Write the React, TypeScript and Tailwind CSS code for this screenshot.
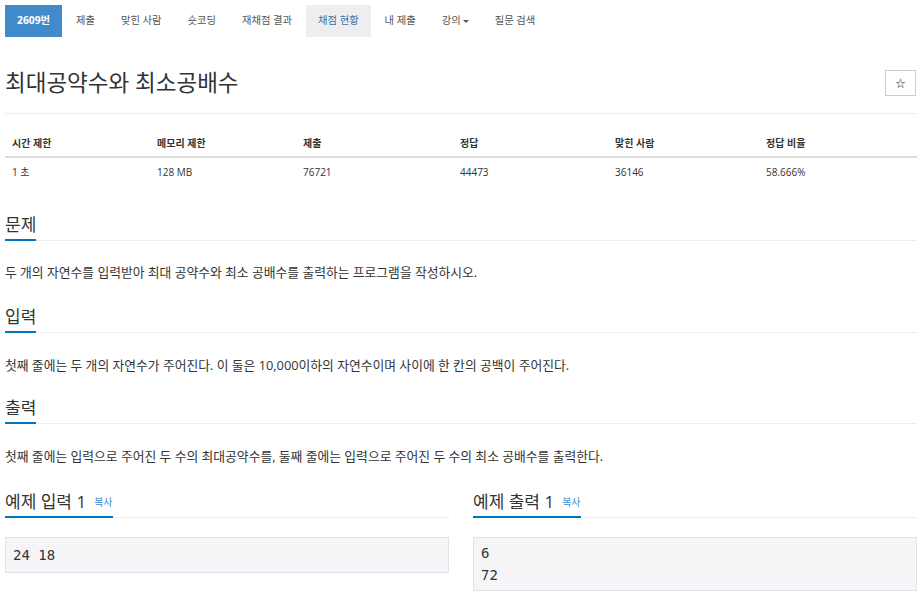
import React from "react";

const FONT = { fontFamily: '"Open Sans", "Noto Sans CJK KR", sans-serif' } as const;

function Tab({ label, active, hover, caret }: { label: string; active?: boolean; hover?: boolean; caret?: boolean }) {
  let cls = "text-[#555]";
  if (active) cls = "bg-[#428bca] text-white font-bold";
  else if (hover) cls = "bg-[#eeeeee] text-[#3a6ea5]";
  return (
    <li className={`flex h-[32px] items-center px-[12px] text-[10.3px] ${cls}`}>
      {label}
      {caret && (
        <span className="ml-[2px] inline-block h-0 w-0 border-l-[3px] border-r-[3px] border-t-[3px] border-l-transparent border-r-transparent border-t-[#555]" />
      )}
    </li>
  );
}

function Heading({ children }: { children: React.ReactNode }) {
  return (
    <div className="flex h-[30px] border-b border-dotted border-[#dddddd]">
      <div className="-mb-[1px] flex items-center border-b-2 border-[#0076c0] text-[17px] text-[#333]">{children}</div>
    </div>
  );
}

export default function App() {
  const headers = ["시간 제한", "메모리 제한", "제출", "정답", "맞힌 사람", "정답 비율"];
  const values = ["1 초", "128 MB", "76721", "44473", "36146", "58.666%"];
  return (
    <div className="min-h-[596px] w-[922px] bg-white px-[5px] text-[#333]" style={FONT}>
      <ul className="mt-[5px] flex gap-[2px]">
        <Tab label="2609번" active />
        <Tab label="제출" />
        <Tab label="맞힌 사람" />
        <Tab label="숏코딩" />
        <Tab label="재채점 결과" />
        <Tab label="채점 현황" hover />
        <Tab label="내 제출" />
        <Tab label="강의" caret />
        <Tab label="질문 검색" />
      </ul>

      <div className="mt-[23px] flex h-[46px] items-center justify-between pr-[1px]">
        <h1 className="text-[22.5px] font-normal text-[#333]">최대공약수와 최소공배수</h1>
        <button className="flex h-[26px] w-[31px] items-center justify-center border border-[#cccccc] bg-white text-[10px] text-[#333]">
          ☆
        </button>
      </div>
      <div className="mt-[7px] border-t border-[#eeeeee]" />

      <div className="mt-[16px]">
        <div className="grid h-[28px] grid-cols-[145px_146px_157px_155px_151px_1fr] items-center border-b-2 border-[#dddddd] text-[10px] font-bold">
          {headers.map((h) => (
            <div key={h} className="pl-[7px]">{h}</div>
          ))}
        </div>
        <div className="grid h-[28px] grid-cols-[145px_146px_157px_155px_151px_1fr] items-center text-[10px]">
          {values.map((v) => (
            <div key={v} className="pl-[7px]">{v}</div>
          ))}
        </div>
      </div>

      <div className="mt-[25px]">
        <Heading>문제</Heading>
        <p className="mt-[21px] text-[12.8px] leading-[20px]">
          두 개의 자연수를 입력받아 최대 공약수와 최소 공배수를 출력하는 프로그램을 작성하시오.
        </p>
      </div>

      <div className="mt-[21px]">
        <Heading>입력</Heading>
        <p className="mt-[22px] text-[12.8px] leading-[20px]">
          첫째 줄에는 두 개의 자연수가 주어진다. 이 둘은 10,000이하의 자연수이며 사이에 한 칸의 공백이 주어진다.
        </p>
      </div>

      <div className="mt-[19px]">
        <Heading>출력</Heading>
        <p className="mt-[22px] text-[12.8px] leading-[20px]">
          첫째 줄에는 입력으로 주어진 두 수의 최대공약수를, 둘째 줄에는 입력으로 주어진 두 수의 최소 공배수를 출력한다.
        </p>
      </div>

      <div className="mt-[22px] grid grid-cols-2 gap-[24px]">
        <div>
          <Heading>
            예제 입력 1<span className="ml-[8px] text-[10px] text-[#428bca]">복사</span>
          </Heading>
          <pre className="mt-[19px] border border-[#e1e1e8] bg-[#f5f5f7] px-[7px] py-[6px] text-[14px] leading-[22px] text-[#333]" style={{ fontFamily: '"DejaVu Sans Mono", monospace' }}>
            24 18
          </pre>
        </div>
        <div>
          <Heading>
            예제 출력 1<span className="ml-[8px] text-[10px] text-[#428bca]">복사</span>
          </Heading>
          <pre className="mt-[19px] border border-[#e1e1e8] bg-[#f5f5f7] px-[7px] py-[4px] text-[14px] leading-[22px] text-[#333]" style={{ fontFamily: '"DejaVu Sans Mono", monospace' }}>
            {"6\n72"}
          </pre>
        </div>
      </div>
    </div>
  );
}
